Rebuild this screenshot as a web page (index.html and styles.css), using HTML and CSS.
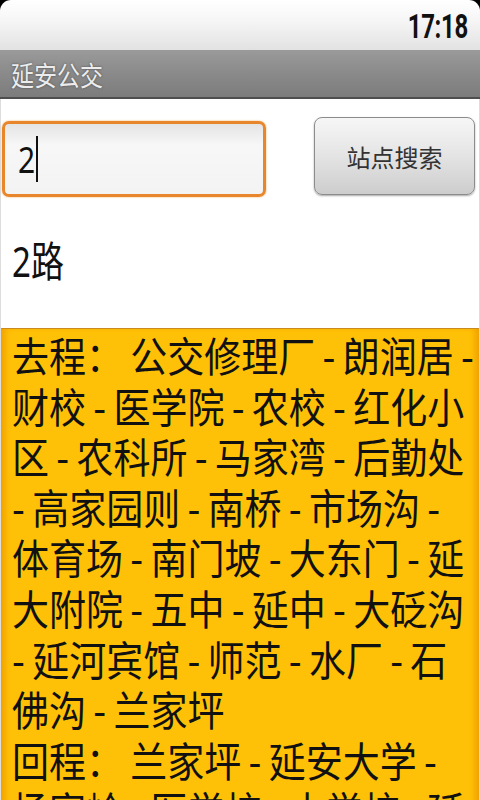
FILE: index.html
```html
<!DOCTYPE html>
<html lang="zh-CN">
<head>
<meta charset="utf-8">
<title>延安公交</title>
<link rel="stylesheet" href="styles.css">
</head>
<body>
<div class="screen">
  <div class="status"><span class="time">17:18</span></div>
  <div class="titlebar"><span class="title">延安公交</span></div>
  <div class="content">
    <div class="search">
      <div class="input"><span class="value">2</span><span class="cursor"></span></div>
      <div class="button">站点搜索</div>
    </div>
    <div class="result"><span class="result-text">2路</span></div>
    <div class="route">
      <div class="line"><span class="txt">去程： 公交修理厂 - 朗润居 -</span></div>
      <div class="line"><span class="txt">财校 - 医学院 - 农校 - 红化小</span></div>
      <div class="line"><span class="txt">区 - 农科所 - 马家湾 - 后勤处</span></div>
      <div class="line"><span class="txt">- 高家园则 - 南桥 - 市场沟 -</span></div>
      <div class="line"><span class="txt">体育场 - 南门坡 - 大东门 - 延</span></div>
      <div class="line"><span class="txt">大附院 - 五中 - 延中 - 大砭沟</span></div>
      <div class="line"><span class="txt">- 延河宾馆 - 师范 - 水厂 - 石</span></div>
      <div class="line"><span class="txt">佛沟 - 兰家坪</span></div>
      <div class="line"><span class="txt">回程： 兰家坪 - 延安大学 -</span></div>
      <div class="line"><span class="txt">杨家岭 - 医学校 - 中学校 - 延</span></div>
      <div class="fade"></div>
    </div>
  </div>
</div>
</body>
</html>
```

FILE: styles.css
```css
html, body {
  margin: 0;
  padding: 0;
  background: #000;
}
.screen {
  width: 480px;
  height: 800px;
  overflow: hidden;
  background: #000;
  display: flex;
  flex-direction: column;
  font-family: "Noto Sans", "Noto Sans CJK SC", sans-serif;
}
.status {
  height: 50px;
  flex: none;
  border-radius: 11px 11px 0 0;
  background: linear-gradient(#ffffff 0%, #f6f6f6 40%, #e2e2e2 100%);
  display: flex;
  justify-content: flex-end;
  align-items: center;
  padding-right: 12px;
}
.time {
  font-family: Roboto, "Noto Sans", sans-serif;
  font-weight: 700;
  font-size: 24px;
  color: #111;
  transform: scaleY(1.35);
  letter-spacing: -0.3px;
  margin-top: 4px;
}
.titlebar {
  height: 47px;
  flex: none;
  background: linear-gradient(#9a9a9a 0%, #8a8a8a 50%, #7c7c7c 100%);
  border-bottom: 2px solid #4e4e4e;
  display: flex;
  align-items: center;
  padding-left: 11px;
}
.title {
  font-family: "Noto Sans CJK SC", sans-serif;
  font-size: 23px;
  color: #ececec;
  text-shadow: 0 0 2px #444;
  transform: scaleY(1.2);
}
.content {
  flex: 1;
  background: #fff;
  display: flex;
  flex-direction: column;
  border-left: 1px solid #ddd;
  border-right: 1px solid #ddd;
}
.search {
  display: flex;
  justify-content: space-between;
  align-items: flex-start;
  margin-top: 18px;
  padding: 0 4px 0 1px;
  height: 80px;
}
.input {
  box-sizing: border-box;
  width: 264px;
  height: 76px;
  margin-top: 4px;
  border: 3px solid #e8862c;
  border-radius: 7px;
  box-shadow: 0 0 2px #f3a55a;
  background: linear-gradient(#e4e4e4 0%, #f7f7f7 30%, #f3f3f3 100%);
  display: flex;
  align-items: center;
  padding-left: 13px;
}
.value {
  font-family: "Noto Sans", sans-serif;
  font-size: 30px;
  color: #111;
  transform: scaleY(1.2);
}
.cursor {
  width: 2px;
  height: 46px;
  background: #111;
  margin-left: 1px;
}
.button {
  box-sizing: border-box;
  width: 161px;
  height: 78px;
  border: 1px solid #8c8c8c;
  border-radius: 8px;
  background: linear-gradient(#f6f6f6 0%, #e6e6e6 45%, #cdcdcd 100%);
  box-shadow: 0 1px 2px rgba(0,0,0,0.35);
  display: flex;
  align-items: center;
  justify-content: center;
  font-family: "Noto Sans CJK SC", sans-serif;
  font-size: 24px;
  color: #333;
}
.result {
  height: 131px;
  box-sizing: border-box;
  padding: 38px 0 0 11px;
  font-family: "Noto Sans", "Noto Sans CJK SC", sans-serif;
  font-size: 33px;
  line-height: 44px;
  color: #111;
}
.result-text {
  display: inline-block;
  line-height: 34px;
  transform: scaleY(1.28);
  transform-origin: 0 0;
}
.route {
  position: relative;
  flex: 1;
  overflow: hidden;
  background: #ffc107;
  border-top: 1px solid #c98a1e;
  box-shadow: inset 7px 0 6px -3px #f0a000, inset -7px 0 6px -3px #f0a000;
  padding: 0 0 0 11px;
  font-family: "Noto Sans CJK SC", sans-serif;
  font-size: 37px;
  line-height: 50.6px;
  color: #111;
}
.line {
  white-space: nowrap;
}
.txt {
  display: inline-block;
  line-height: 40px;
  transform: scaleY(1.12);
  word-spacing: -1px;
}
.fade {
  position: absolute;
  left: 0;
  right: 0;
  bottom: 0;
  height: 16px;
  background: linear-gradient(rgba(255,255,255,0.55), rgba(255,255,255,0.9));
}
```
